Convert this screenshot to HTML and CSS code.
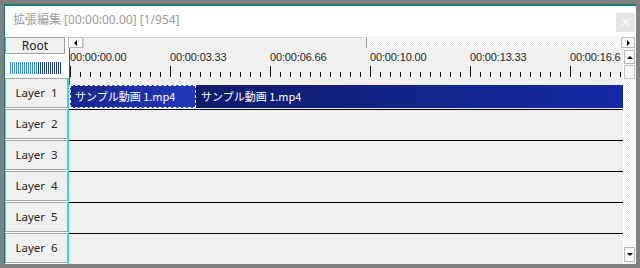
FILE: index.html
```html
<!DOCTYPE html>
<html lang="ja">
<head>
<meta charset="utf-8">
<title>拡張編集</title>
<link rel="stylesheet" href="styles.css">
</head>
<body>
<div class="window">
  <div class="titlebar">
    <span class="title">拡張編集 [00:00:00.00] [1/954]</span>
    <span class="close">×</span>
  </div>
  <div class="main">
    <div class="head">
      <div class="root">Root</div>
      <div class="meter"><div class="m-light"></div><div class="m-dark"></div></div>
    </div>
    <div class="hscroll">
      <div class="sbtn hbtn-l"><span class="arr-l"></span></div>
      <div class="hthumb"></div>
      <div class="htrack"></div>
      <div class="sbtn hbtn-r"><span class="arr-r"></span></div>
    </div>
    <div class="ruler">
      <div class="labels">
        <span>00:00:00.00</span><span>00:00:03.33</span><span>00:00:06.66</span><span>00:00:10.00</span><span>00:00:13.33</span><span class="last">00:00:16.6</span>
      </div>
      <div class="ticks"></div>
    </div>
    <div class="vscroll">
      <div class="sbtn vbtn-u"><span class="arr-u"></span></div>
      <div class="vthumb"></div>
      <div class="vtrack"></div>
      <div class="sbtn vbtn-d"><span class="arr-d"></span></div>
    </div>
    <div class="layers">
      <div class="layer">Layer  1</div>
      <div class="layer">Layer  2</div>
      <div class="layer">Layer  3</div>
      <div class="layer">Layer  4</div>
      <div class="layer">Layer  5</div>
      <div class="layer">Layer  6</div>
    </div>
    <div class="rows">
      <div class="row">
        <div class="clips">
          <div class="clip sel">サンプル動画 1.mp4</div>
          <div class="clip obj">サンプル動画 1.mp4</div>
        </div>
      </div>
      <div class="row"></div>
      <div class="row"></div>
      <div class="row"></div>
      <div class="row"></div>
      <div class="row"></div>
    </div>
    <div class="cursor"></div>
  </div>
</div>
</body>
</html>
```

FILE: styles.css
```css
html, body {
  margin: 0;
  padding: 0;
}
body {
  width: 640px;
  height: 268px;
  overflow: hidden;
  background: #808080;
  padding: 4px;
  box-sizing: border-box;
}
.window {
  width: 632px;
  height: 260px;
  box-sizing: border-box;
  background: #fff;
  border-top: 2px solid #137c79;
  border-left: 1px solid #137c79;
  display: flex;
  flex-direction: column;
}
.titlebar {
  height: 28px;
  display: flex;
  justify-content: space-between;
  align-items: flex-start;
  padding-left: 8px;
}
.title {
  font: 12px/28px "Noto Sans", "Noto Sans CJK JP", sans-serif;
  color: #9b9b9b;
  white-space: nowrap;
}
.close {
  width: 19px;
  height: 19px;
  margin-top: 7px;
  margin-right: 1px;
  background: #e5e5e5;
  color: #fbfbfb;
  font: bold 12px/19px "DejaVu Sans", sans-serif;
  text-align: center;
}
.main {
  position: relative;
  height: 230px;
  display: grid;
  grid-template-columns: 64px 554px 13px;
  grid-template-rows: 14px 30px 186px;
}
.head {
  grid-column: 1;
  grid-row: 1 / 3;
  display: flex;
  flex-direction: column;
}
.root {
  margin-top: 3px;
  width: 60px;
  height: 17px;
  box-sizing: border-box;
  border: 1px solid #a0a0a0;
  background: #f0f0f0;
  color: #1e1e1e;
  font: 12px/15px "Noto Sans", sans-serif;
  text-align: center;
}
.meter {
  margin: 8px 0 0 5px;
  width: 52px;
  height: 12px;
  display: flex;
}
.m-light {
  width: 28px;
  background: repeating-linear-gradient(to right, #3c88ee 0 1px, #fff 1px 2px);
}
.m-dark {
  flex: 1;
  background: repeating-linear-gradient(to right, #1d3d8e 0 1px, #fff 1px 2px);
}
.hscroll {
  grid-column: 2 / 4;
  grid-row: 1;
  margin-left: -1px;
  padding-top: 2px;
  display: flex;
  align-items: flex-start;
}
.sbtn {
  box-sizing: border-box;
  border: 1px solid #b9b9b9;
  background: #f7f7f7;
  display: flex;
  align-items: center;
  justify-content: center;
}
.hbtn-l {
  width: 15px;
  height: 11px;
  margin-top: 1px;
}
.hthumb {
  width: 284px;
  height: 12px;
  margin-top: 1px;
  box-sizing: border-box;
  border: 1px solid #a0a0a0;
  border-top-color: #d4d4d4;
  border-left-color: #d4d4d4;
  background: #f0f0f0;
}
.htrack {
  flex: 1;
  height: 12px;
  background: repeating-conic-gradient(#ededed 0 25%, #fff 0 50%) 0 0 / 2px 2px;
}
.hbtn-r {
  width: 14px;
  height: 11px;
  margin-top: 1px;
  margin-right: 1px;
}
.arr-l, .arr-r, .arr-u, .arr-d {
  width: 0;
  height: 0;
}
.arr-l {
  border-right: 3px solid #000;
  border-top: 3px solid transparent;
  border-bottom: 3px solid transparent;
}
.arr-r {
  border-left: 3px solid #000;
  border-top: 3px solid transparent;
  border-bottom: 3px solid transparent;
}
.arr-u {
  border-bottom: 3px solid #000;
  border-left: 3px solid transparent;
  border-right: 3px solid transparent;
}
.arr-d {
  border-top: 3px solid #000;
  border-left: 3px solid transparent;
  border-right: 3px solid transparent;
}
.ruler {
  grid-column: 2;
  grid-row: 2;
  background: #f0f0f0;
  overflow: hidden;
  display: flex;
  flex-direction: column;
}
.labels {
  height: 18px;
  box-sizing: border-box;
  padding: 3px 0 0 1px;
  display: flex;
  font: 11px/13px "Liberation Sans", Arial, sans-serif;
  letter-spacing: -0.15px;
  color: #262626;
}
.labels span {
  flex: 0 0 100px;
  white-space: nowrap;
}
.labels span.last {
  flex: 0 0 auto;
}
.ticks {
  margin-left: 1px;
  width: 551px;
  height: 11px;
  background:
    repeating-linear-gradient(to right, #111 0 1px, transparent 1px 100px) 0 0 / 100% 11px no-repeat,
    repeating-linear-gradient(to right, #111 0 1px, transparent 1px 10px) 0 6px / 100% 5px no-repeat;
}
.vscroll {
  grid-column: 3;
  grid-row: 2 / 4;
  box-sizing: border-box;
  border-left: 1px solid #fff;
  padding: 2px 1px 2px 0;
  background: repeating-conic-gradient(#ededed 0 25%, #fff 0 50%) 0 0 / 2px 2px;
  display: flex;
  flex-direction: column;
}
.vbtn-u {
  height: 14px;
}
.vthumb {
  margin-top: 1px;
  height: 14px;
  box-sizing: border-box;
  border: 1px solid #c4c4c4;
  background: #f7f7f7;
}
.vtrack {
  flex: 1;
}
.vbtn-d {
  height: 15px;
}
.layers {
  grid-column: 1;
  grid-row: 3;
  border-right: 1px solid #3fd3de;
  display: flex;
  flex-direction: column;
  gap: 1px;
}
.layer {
  height: 30px;
  box-sizing: border-box;
  border: 1px solid #a6a6a6;
  background: #f0f0f0;
  color: #2a2420;
  font: 11.5px/28px "Noto Sans", sans-serif;
  text-align: center;
  white-space: pre;
}
.rows {
  grid-column: 2;
  grid-row: 3;
  display: flex;
  flex-direction: column;
}
.row {
  height: 31px;
  box-sizing: border-box;
  background: #f0f0f0;
}
.row + .row {
  border-top: 1px solid #000;
}
.clips {
  display: flex;
  margin: 7px 0 0 1px;
  height: 23px;
}
.clip {
  box-sizing: border-box;
  color: #fff;
  font: 11px/21px "Noto Sans CJK JP", sans-serif;
  white-space: nowrap;
  overflow: hidden;
}
.clip.sel {
  width: 126px;
  border: 1px dashed #fff;
  padding-left: 4px;
  background: linear-gradient(90deg, #18278c, #2137bd);
}
.clip.obj {
  flex: 1;
  padding: 1px 0 0 5px;
  background: linear-gradient(90deg, #0f1c6c, #1529a4);
}
.cursor {
  position: absolute;
  left: 64px;
  top: 14px;
  width: 1px;
  height: 37px;
  background: #e2141e;
}
```
